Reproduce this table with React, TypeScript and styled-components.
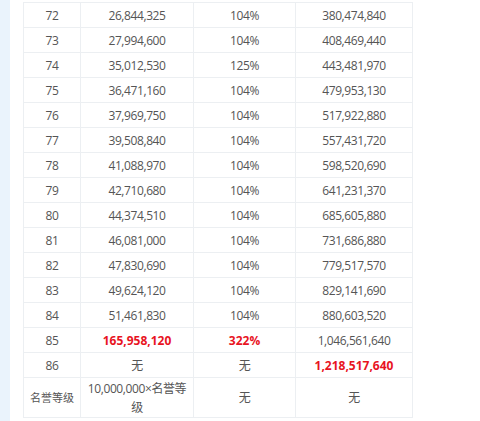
import styled, { createGlobalStyle } from 'styled-components';

type Row = {
    level: string;
    exp: string;
    rate: string;
    total: string;
    hotExp?: boolean;
    hotRate?: boolean;
    hotTotal?: boolean;
};

const rows: Row[] = [
    { level: '72', exp: '26,844,325', rate: '104%', total: '380,474,840' },
    { level: '73', exp: '27,994,600', rate: '104%', total: '408,469,440' },
    { level: '74', exp: '35,012,530', rate: '125%', total: '443,481,970' },
    { level: '75', exp: '36,471,160', rate: '104%', total: '479,953,130' },
    { level: '76', exp: '37,969,750', rate: '104%', total: '517,922,880' },
    { level: '77', exp: '39,508,840', rate: '104%', total: '557,431,720' },
    { level: '78', exp: '41,088,970', rate: '104%', total: '598,520,690' },
    { level: '79', exp: '42,710,680', rate: '104%', total: '641,231,370' },
    { level: '80', exp: '44,374,510', rate: '104%', total: '685,605,880' },
    { level: '81', exp: '46,081,000', rate: '104%', total: '731,686,880' },
    { level: '82', exp: '47,830,690', rate: '104%', total: '779,517,570' },
    { level: '83', exp: '49,624,120', rate: '104%', total: '829,141,690' },
    { level: '84', exp: '51,461,830', rate: '104%', total: '880,603,520' },
    { level: '85', exp: '165,958,120', rate: '322%', total: '1,046,561,640', hotExp: true, hotRate: true },
    { level: '86', exp: '无', rate: '无', total: '1,218,517,640', hotTotal: true },
];

const GlobalStyle = createGlobalStyle`
    html, body {
        margin: 0;
        padding: 0;
        background: #fff;
        overflow: hidden;
    }
`;

function App() {
    return (
        <>
            <GlobalStyle />
            <Page>
                <Strip />
                <Content>
                    <Table>
                        <colgroup>
                            <col style={{ width: 57 }} />
                            <col style={{ width: 113 }} />
                            <col style={{ width: 102 }} />
                            <col style={{ width: 117 }} />
                        </colgroup>
                        <tbody>
                            {rows.map(r => (
                                <tr key={r.level}>
                                    <Cell>{r.level}</Cell>
                                    <Cell $hot={r.hotExp}>{r.exp}</Cell>
                                    <Cell $hot={r.hotRate}>{r.rate}</Cell>
                                    <Cell $hot={r.hotTotal}>{r.total}</Cell>
                                </tr>
                            ))}
                            <tr>
                                <LabelCell>名誉等级</LabelCell>
                                <TallCell>10,000,000×名誉等级</TallCell>
                                <TallCell>无</TallCell>
                                <TallCell>无</TallCell>
                            </tr>
                        </tbody>
                    </Table>
                    <Caption>由于 数据 来自 网络 仅供 参考</Caption>
                </Content>
            </Page>
        </>
    );
}

export default App;

const Page = styled.div`
    display: flex;
    height: 421px;
    overflow: hidden;
`;

const Strip = styled.div`
    width: 10px;
    flex-shrink: 0;
    background: #eaf3fc;
`;

const Content = styled.div`
    padding: 2px 0 0 13px;
`;

const Table = styled.table`
    border-collapse: collapse;
    table-layout: fixed;
    width: 389px;
    font-family: "Open Sans", "Noto Sans CJK SC", sans-serif;
    font-size: 12px;
    color: #555;
`;

const Cell = styled.td<{ $hot?: boolean }>`
    height: 24px;
    padding: 0 4px;
    text-align: center;
    border: 1px solid #eceff2;
    letter-spacing: ${props => (props.$hot ? '0' : '-0.4px')};
    color: ${props => (props.$hot ? '#e8141f' : '#555')};
    font-weight: ${props => (props.$hot ? 700 : 400)};
`;

const TallCell = styled.td`
    height: 39px;
    padding: 0 6px;
    text-align: center;
    border: 1px solid #eceff2;
    letter-spacing: -0.4px;
    line-height: 19px;
`;

const LabelCell = styled(TallCell)`
    padding: 0;
    font-size: 11px;
    letter-spacing: 0;
`;

const Caption = styled.p`
    margin: 1px 0 0;
    padding-left: 244px;
    font-family: "Noto Sans CJK SC", sans-serif;
    font-size: 17px;
    color: #333;
    word-spacing: 6px;
    white-space: nowrap;
`;
